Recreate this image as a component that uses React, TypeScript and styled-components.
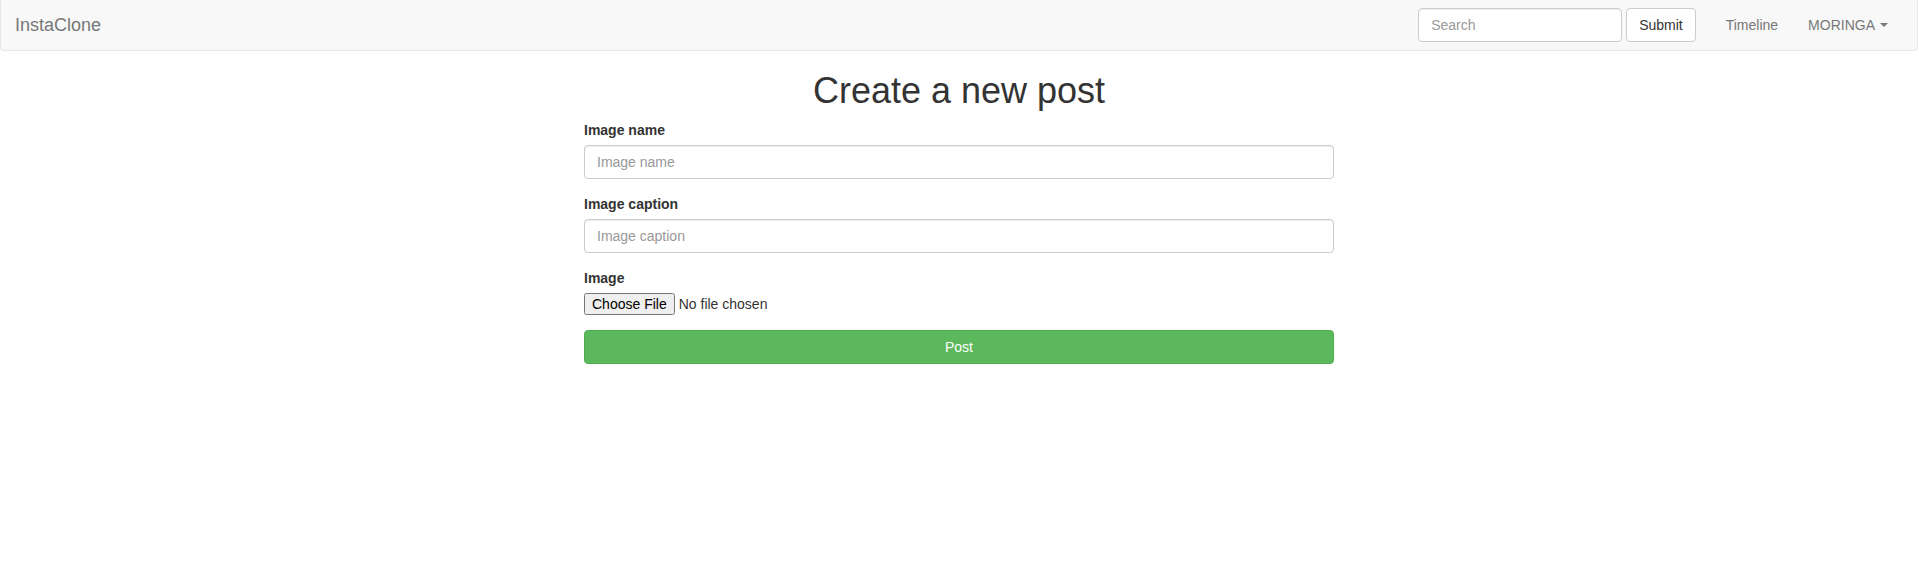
import React from "react";
import styled, { createGlobalStyle } from "styled-components";

const GlobalStyle = createGlobalStyle`
  *, *::before, *::after { box-sizing: border-box; }
  html, body { margin: 0; padding: 0; background: #fff; }
  body {
    font-family: "Liberation Sans", Arial, Helvetica, sans-serif;
    font-size: 14px;
    line-height: 1.42857143;
    color: #333;
  }
`;

const Navbar = styled.nav`
  display: flex;
  justify-content: space-between;
  align-items: flex-start;
  width: calc(100% - 1px);
  min-height: 51px;
  background: #f8f8f8;
  border: 1px solid #e7e7e7;
  border-top-width: 0;
  border-radius: 0 0 4px 4px;
  padding: 0 14px 0 0;
  margin-bottom: 20px;
`;

const Brand = styled.a`
  display: block;
  height: 50px;
  padding: 15px 14px;
  font-size: 18px;
  line-height: 20px;
  color: #777;
  text-decoration: none;
`;

const RightSide = styled.div`
  display: flex;
  align-items: flex-start;
`;

const SearchForm = styled.form`
  display: flex;
  align-items: center;
  gap: 4px;
  padding: 0 15px;
  margin-top: 8px;
`;

const SearchInput = styled.input`
  width: 204px;
  height: 34px;
  padding: 6px 12px;
  font-family: inherit;
  font-size: 14px;
  line-height: 20px;
  color: #555;
  background: #fff;
  border: 1px solid #ccc;
  border-radius: 4px;
  box-shadow: inset 0 1px 1px rgba(0, 0, 0, 0.075);
  outline: none;
  &::placeholder { color: #999; }
`;

const DefaultButton = styled.button`
  height: 34px;
  padding: 6px 12px;
  font-family: inherit;
  font-size: 14px;
  line-height: 20px;
  color: #333;
  background: #fff;
  border: 1px solid #ccc;
  border-radius: 4px;
  cursor: pointer;
`;

const NavList = styled.ul`
  display: flex;
  list-style: none;
  margin: 0;
  padding: 0;
`;

const NavLink = styled.a`
  display: flex;
  align-items: center;
  padding: 15px;
  line-height: 20px;
  color: #777;
  text-decoration: none;
`;

const Caret = styled.span`
  display: inline-block;
  width: 0;
  height: 0;
  margin-left: 5px;
  border-top: 4px solid #777;
  border-right: 4px solid transparent;
  border-left: 4px solid transparent;
`;

const Main = styled.main`
  width: 751px;
  padding-right: 1px;
  margin: 0 auto;
`;

const Title = styled.h1`
  margin: 0 0 9px;
  font-size: 36px;
  font-weight: 500;
  line-height: 1.1;
  text-align: center;
  color: #333;
`;

const FormGroup = styled.div`
  margin-bottom: 15px;
`;

const Label = styled.label`
  display: inline-block;
  margin-bottom: 5px;
  font-weight: 700;
`;

const FormControl = styled.input`
  display: block;
  width: 100%;
  height: 34px;
  padding: 6px 12px;
  font-family: inherit;
  font-size: 14px;
  line-height: 20px;
  color: #555;
  background: #fff;
  border: 1px solid #ccc;
  border-radius: 4px;
  box-shadow: inset 0 1px 1px rgba(0, 0, 0, 0.075);
  outline: none;
  &::placeholder { color: #999; }
`;

const FileInput = styled.input`
  display: block;
  font-family: inherit;
  font-size: 14px;
  line-height: 20px;
  color: #333;
`;

const SubmitButton = styled.button`
  display: block;
  width: 100%;
  height: 34px;
  padding: 6px 12px;
  font-family: inherit;
  font-size: 14px;
  line-height: 20px;
  color: #fff;
  background: #5cb85c;
  border: 1px solid #4cae4c;
  border-radius: 4px;
  cursor: pointer;
`;

export default function App() {
  return (
    <>
      <GlobalStyle />
      <Navbar>
        <Brand href="#">InstaClone</Brand>
        <RightSide>
          <SearchForm onSubmit={(e) => e.preventDefault()}>
            <SearchInput type="text" placeholder="Search" />
            <DefaultButton type="submit">Submit</DefaultButton>
          </SearchForm>
          <NavList>
            <li>
              <NavLink href="#">Timeline</NavLink>
            </li>
            <li>
              <NavLink href="#">
                MORINGA
                <Caret />
              </NavLink>
            </li>
          </NavList>
        </RightSide>
      </Navbar>
      <Main>
        <Title>Create a new post</Title>
        <form onSubmit={(e) => e.preventDefault()}>
          <FormGroup>
            <Label htmlFor="name">Image name</Label>
            <FormControl id="name" type="text" placeholder="Image name" />
          </FormGroup>
          <FormGroup>
            <Label htmlFor="caption">Image caption</Label>
            <FormControl id="caption" type="text" placeholder="Image caption" />
          </FormGroup>
          <FormGroup>
            <Label htmlFor="image">Image</Label>
            <FileInput id="image" type="file" />
          </FormGroup>
          <SubmitButton type="submit">Post</SubmitButton>
        </form>
      </Main>
    </>
  );
}
